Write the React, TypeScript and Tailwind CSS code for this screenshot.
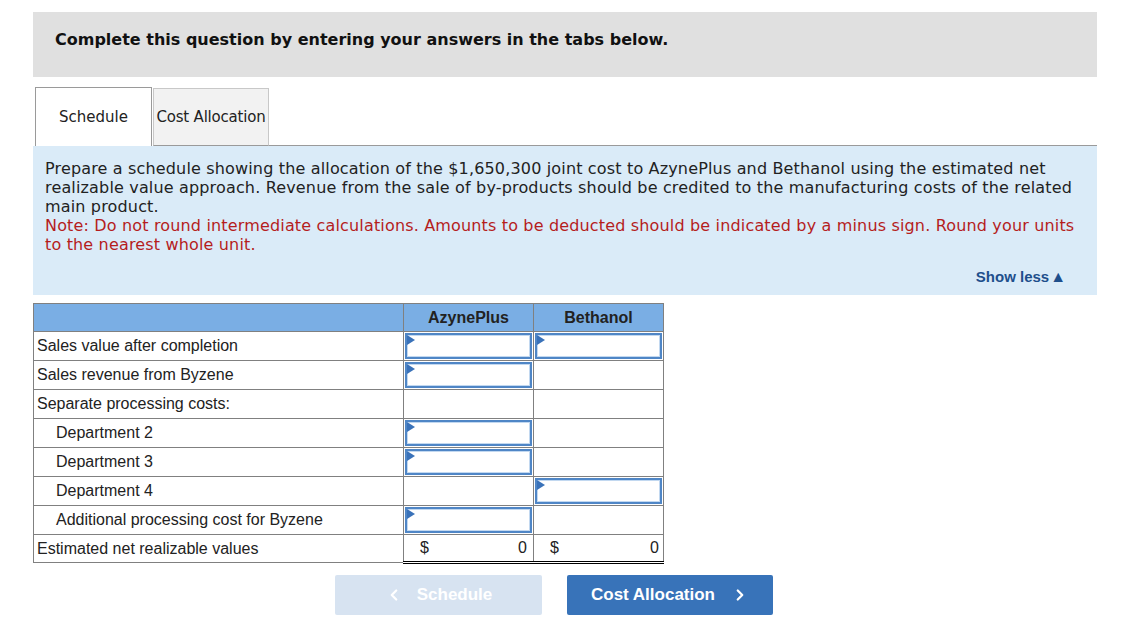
import React from "react";
import { ChevronLeft, ChevronRight } from "lucide-react";

const Tri = () => (
  <svg className="absolute left-0 top-0" width="8" height="10" viewBox="0 0 8 10">
    <polygon points="0,0 8,5 0,10" fill="#3a72b9" />
  </svg>
);

const Input = () => (
  <div className="relative h-full w-full border-2 border-[#4f86c6] bg-white shadow-[inset_0_0_0_1px_#c2d8f0]">
    <Tri />
  </div>
);

type Row = { label: string; indent?: boolean; a?: boolean; b?: boolean };

const rows: Row[] = [
  { label: "Sales value after completion", a: true, b: true },
  { label: "Sales revenue from Byzene", a: true },
  { label: "Separate processing costs:" },
  { label: "Department 2", indent: true, a: true },
  { label: "Department 3", indent: true, a: true },
  { label: "Department 4", indent: true, b: true },
  { label: "Additional processing cost for Byzene", indent: true, a: true },
];

export default function App() {
  return (
    <div className="min-h-[628px] w-[1140px] bg-white pl-[33px] pt-[12px] font-['Liberation_Sans',Arial,sans-serif]">
      <div className="w-[1064px]">
        <div className="h-[65px] bg-[#e0e0e0] pl-[22px] pt-[18px] font-['DejaVu_Sans',Verdana,sans-serif] text-[16px] font-bold leading-[19px] text-[#111]">
          Complete this question by entering your answers in the tabs below.
        </div>

        <div className="mt-[10px] flex h-[59px] items-end">
          <div className="ml-[2px] flex h-[59px] w-[117px] items-center justify-center border border-b-0 border-[#9a9a9a] bg-white font-['DejaVu_Sans',Verdana,sans-serif] text-[15px] text-[#222]">
            Schedule
          </div>
          <div className="ml-[1px] flex h-[58px] w-[116px] items-center justify-center border border-[#c8c8c8] border-b-[#9a9a9a] bg-[#f2f2f2] font-['DejaVu_Sans',Verdana,sans-serif] text-[15px] tracking-[-0.2px] text-[#222]">
            Cost Allocation
          </div>
          <div className="h-[1px] flex-1 bg-[#9a9a9a]" />
        </div>

        <div className="bg-[#daebf8] px-[12px] pb-[9px] pt-[13px] font-['DejaVu_Sans',Verdana,sans-serif] text-[16px] leading-[19px] tracking-[0.16px] text-[#222]">
          <p>
            Prepare a schedule showing the allocation of the $1,650,300 joint cost to AzynePlus and Bethanol using the estimated net
            realizable value approach. Revenue from the sale of by-products should be credited to the manufacturing costs of the related
            main product.
          </p>
          <p className="text-[#b51d1d]">
            Note: Do not round intermediate calculations. Amounts to be deducted should be indicated by a minus sign. Round your units
            to the nearest whole unit.
          </p>
          <div className="mt-[13px] flex items-center justify-end pr-[19px] font-['Liberation_Sans',Arial,sans-serif] text-[15px] font-bold tracking-normal text-[#1e4f8c]">
            Show less<span className="ml-[1px] text-[16px] leading-none">▲</span>
          </div>
        </div>

        <table className="mt-[8px] border-collapse text-[16px] text-[#222]">
          <thead>
            <tr className="h-[28px] bg-[#7aaee4]">
              <th className="w-[370px] border border-[#808080]" />
              <th className="w-[130px] border border-[#808080] text-[16px] font-bold text-[#222]">AzynePlus</th>
              <th className="w-[130px] border border-[#808080] text-[16px] font-bold text-[#222]">Bethanol</th>
            </tr>
          </thead>
          <tbody>
            {rows.map((r) => (
              <tr key={r.label} className="h-[29px]">
                <td className={`border border-[#808080] ${r.indent ? "pl-[22px]" : "pl-[3px]"}`}>{r.label}</td>
                <td className="h-[29px] border border-[#808080] p-[1px]">{r.a ? <Input /> : null}</td>
                <td className="h-[29px] border border-[#808080] p-[1px]">{r.b ? <Input /> : null}</td>
              </tr>
            ))}
            <tr className="h-[28px]">
              <td className="border border-[#808080] pl-[3px]">Estimated net realizable values</td>
              <td className="border border-[#808080] border-t-black border-b-[3px] border-b-black [border-bottom-style:double]">
                <div className="flex justify-between pl-[16px] pr-[6px]">
                  <span>$</span>
                  <span>0</span>
                </div>
              </td>
              <td className="border border-[#808080] border-t-black border-b-[3px] border-b-black [border-bottom-style:double]">
                <div className="flex justify-between pl-[16px] pr-[4px]">
                  <span>$</span>
                  <span>0</span>
                </div>
              </td>
            </tr>
          </tbody>
        </table>

        <div className="mt-[11px] flex gap-[25px] pl-[302px]">
          <button className="flex h-[40px] w-[207px] items-center justify-center rounded-[2px] bg-[#d7e3f1] text-[17px] font-bold text-white">
            <ChevronLeft size={18} strokeWidth={3} className="mr-[14px]" />
            Schedule
          </button>
          <button className="flex h-[40px] w-[206px] items-center justify-center rounded-[2px] bg-[#3873b9] text-[17px] font-bold text-white">
            <span>Cost Allocation</span>
            <ChevronRight size={18} strokeWidth={3} className="ml-[16px]" />
          </button>
        </div>
      </div>
    </div>
  );
}
